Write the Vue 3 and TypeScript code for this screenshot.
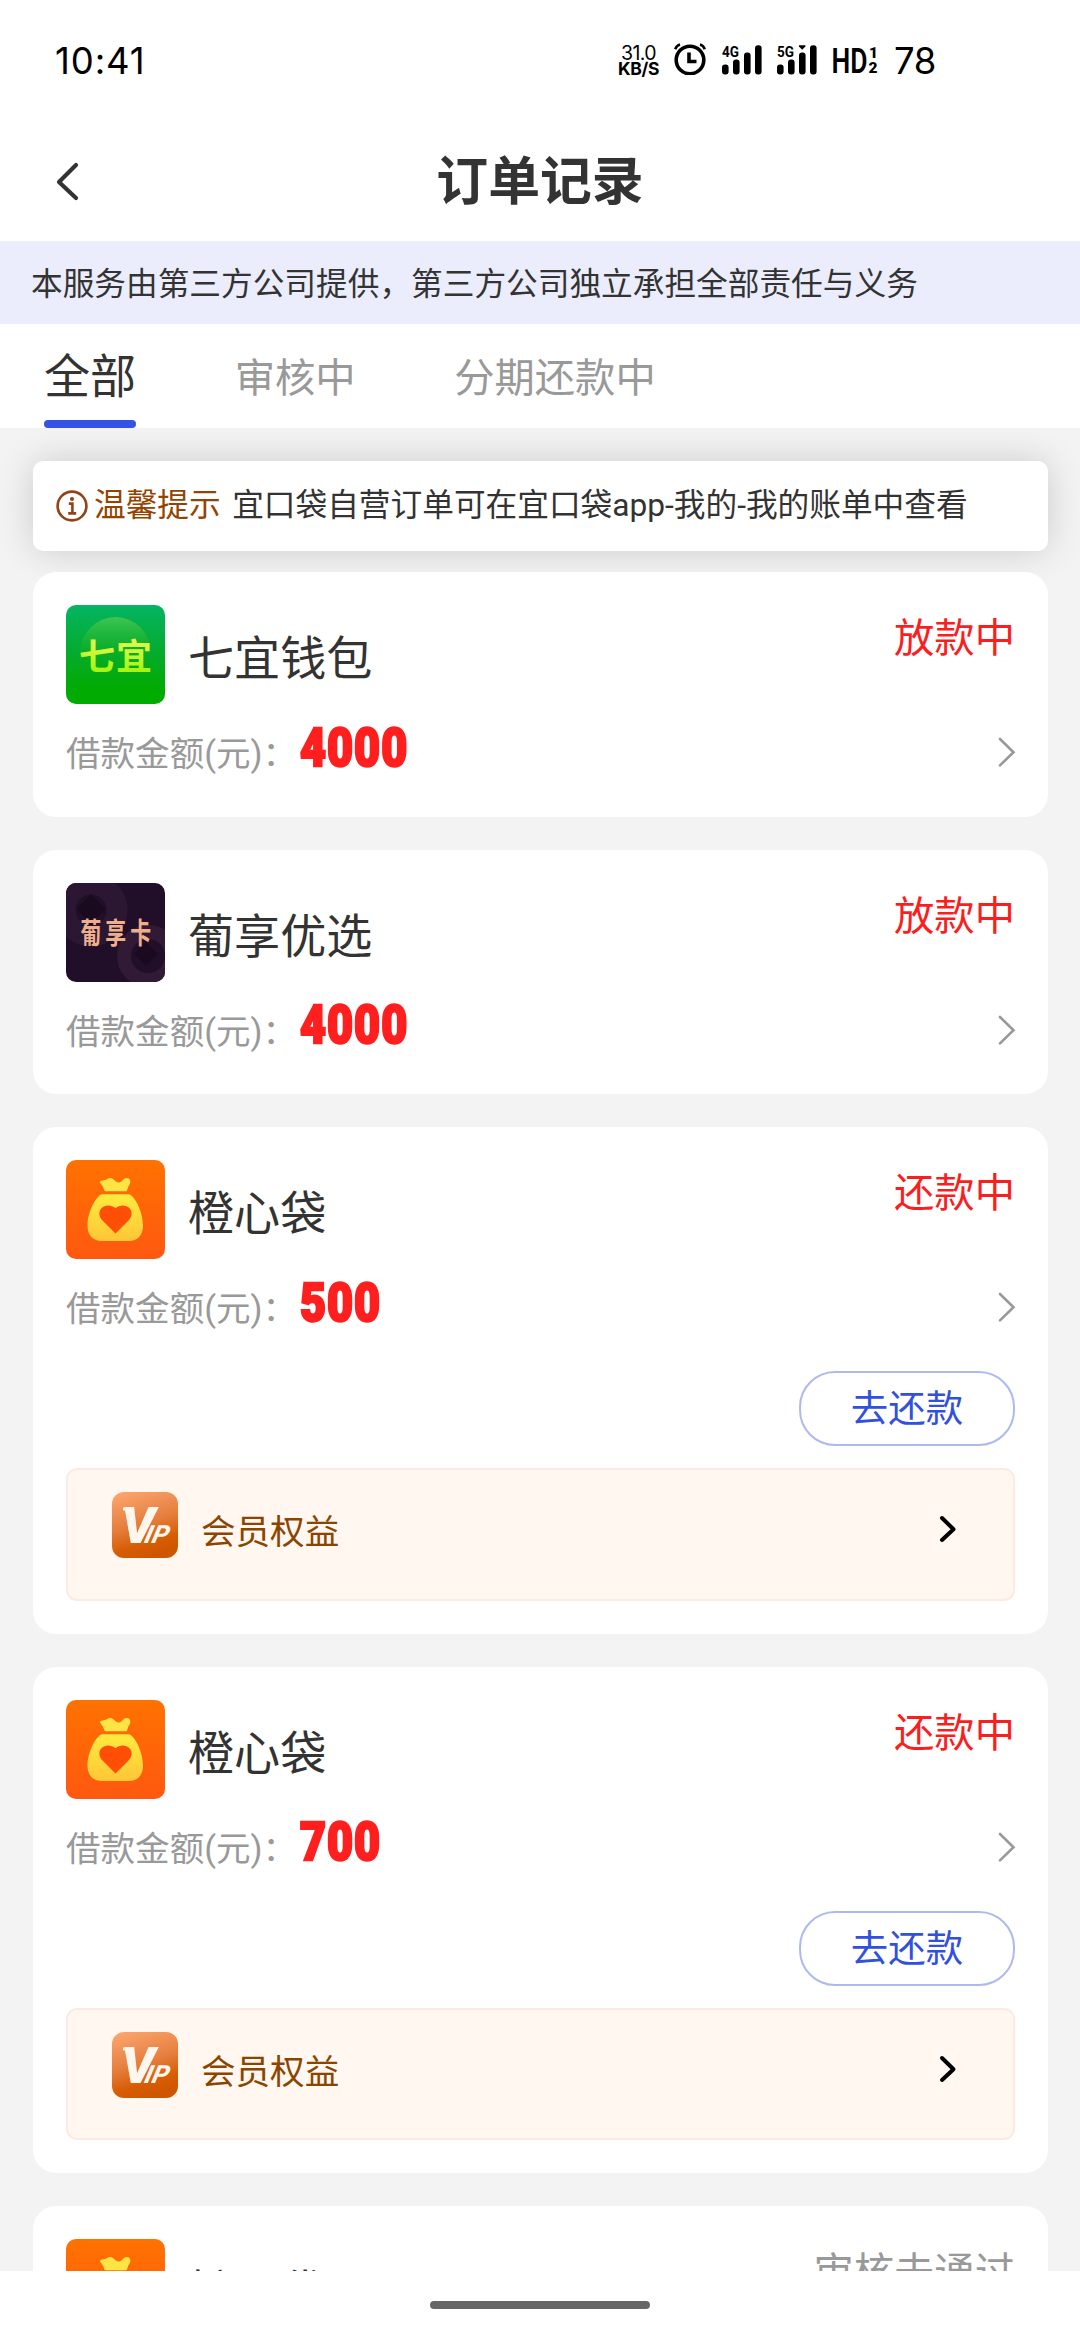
<script setup lang="ts">
interface Order {
  id: number
  logo: 'qiyi' | 'puxiang' | 'bag'
  name: string
  status: string
  muted?: boolean
  amount: string
  repay?: boolean
}

const tabs: string[] = ['全部', '审核中', '分期还款中']

const orders: Order[] = [
  { id: 1, logo: 'qiyi', name: '七宜钱包', status: '放款中', amount: '4000' },
  { id: 2, logo: 'puxiang', name: '葡享优选', status: '放款中', amount: '4000' },
  { id: 3, logo: 'bag', name: '橙心袋', status: '还款中', amount: '500', repay: true },
  { id: 4, logo: 'bag', name: '橙心袋', status: '还款中', amount: '700', repay: true },
  { id: 5, logo: 'bag', name: '橙心袋', status: '审核未通过', muted: true, amount: '500' },
]
</script>

<template>
  <div class="screen">
    <header class="statusbar">
      <span class="clock">10:41</span>
      <div class="indicators">
        <div class="speed">
          <span class="speed-num">31.0</span>
          <span class="speed-unit">KB/S</span>
        </div>
        <svg class="alarm" width="32" height="32" viewBox="0 0 32 32" fill="none" stroke="#000">
          <circle cx="16" cy="17" r="13.8" stroke-width="3.6" />
          <path d="M15 9.500v9h7.500" stroke-width="3.6" />
          <path d="M1.200 6.200Q2.600 2.600 6 1.600M30.800 6.200Q29.400 2.600 26 1.600" stroke-width="2.6" />
        </svg>
        <svg class="sig4" width="40" height="32" viewBox="0 0 40 32">
          <text x="0" y="12.500" class="net" textLength="17" lengthAdjust="spacingAndGlyphs">4G</text>
          <rect x="0" y="20.500" width="6.600" height="10" rx="3" />
          <rect x="11" y="15.500" width="6.600" height="15" rx="3" />
          <rect x="22" y="8.500" width="6.600" height="22" rx="3" />
          <rect x="33" y="1.300" width="6.600" height="29.200" rx="3" />
        </svg>
        <svg class="sig5" width="40" height="32" viewBox="0 0 40 32">
          <text x="0" y="12.500" class="net" textLength="17" lengthAdjust="spacingAndGlyphs">5G</text>
          <rect x="0" y="20.500" width="6.600" height="10" rx="3" />
          <rect x="11" y="15.500" width="6.600" height="15" rx="3" />
          <rect x="22" y="8.500" width="6.600" height="22" rx="3" />
          <path d="M22 1.200h6.400v1.400l-3.200 3.200-3.200-3.200z" />
          <rect x="33" y="1.300" width="6.600" height="29.200" rx="3" />
        </svg>
        <svg class="hd" width="46" height="32" viewBox="0 0 46 32">
          <text x="-1.500" y="28.500" class="hd-text" textLength="36" lengthAdjust="spacingAndGlyphs">HD</text>
          <text x="36" y="13.500" class="hd-sim">1</text>
          <text x="35.500" y="28.500" class="hd-sim">2</text>
        </svg>
        <span class="battery">78</span>
      </div>
    </header>

    <nav class="navbar">
      <svg class="back" width="25" height="42" viewBox="0 0 25 42" fill="none" stroke="#333" stroke-width="4.2" stroke-linecap="round" stroke-linejoin="round">
        <path d="M21 4 4 21 21 37" />
      </svg>
      <h1>订单记录</h1>
    </nav>

    <div class="disclaimer">本服务由第三方公司提供，第三方公司独立承担全部责任与义务</div>

    <div class="tabs">
      <div v-for="(tab, i) in tabs" :key="tab" class="tab" :class="{ active: i === 0 }">{{ tab }}</div>
    </div>

    <main class="list">
      <div class="tip">
        <svg class="info" width="32" height="32" viewBox="0 0 32 32" fill="none" stroke="#934417">
          <circle cx="16" cy="16" r="14.4" stroke-width="2.6" />
          <circle cx="16" cy="9" r="2.1" fill="#934417" stroke="none" />
          <path d="M12.800 13.600h3.600v9.600M12.200 23.400h8" stroke-width="2.6" />
        </svg>
        <span class="tip-label">温馨提示</span>
        <span class="tip-text">宜口袋自营订单可在宜口袋app-我的-我的账单中查看</span>
      </div>

      <section v-for="order in orders" :key="order.id" class="card">
        <div class="card-head">
          <svg v-if="order.logo === 'qiyi'" class="logo" viewBox="0 0 99 99">
            <defs>
              <linearGradient id="qy-bg" x1="0" y1="0" x2="0" y2="1">
                <stop offset="0" stop-color="#04b562" />
                <stop offset="0.45" stop-color="#05ab31" />
                <stop offset="0.85" stop-color="#02ab02" />
              </linearGradient>
              <linearGradient id="qy-moon" x1="0" y1="0" x2="0" y2="1">
                <stop offset="0" stop-color="#3fc552" />
                <stop offset="0.55" stop-color="#12ad1c" stop-opacity="0.3" />
                <stop offset="0.9" stop-color="#02ab02" stop-opacity="0" />
              </linearGradient>
              <linearGradient id="qy-text" x1="0" y1="0" x2="0" y2="1">
                <stop offset="0.1" stop-color="#f2f95a" />
                <stop offset="0.9" stop-color="#9df50c" />
              </linearGradient>
            </defs>
            <rect width="99" height="99" fill="url(#qy-bg)" />
            <circle cx="49.500" cy="47" r="35" fill="url(#qy-moon)" />
            <text x="13" y="65" class="qy-mark" fill="url(#qy-text)" textLength="73">七宜</text>
          </svg>
          <svg v-else-if="order.logo === 'puxiang'" class="logo" viewBox="0 0 99 99">
            <rect width="99" height="99" fill="#210e29" />
            <circle cx="25" cy="27" r="26" fill="none" stroke="#2b1731" stroke-width="21" />
            <path d="M25 11 40 26 25 41 10 26Z" fill="#1a0a20" />
            <circle cx="82" cy="73" r="24" fill="none" stroke="#311a35" stroke-width="14" />
            <path d="M80 59 92 71 80 83 68 71Z" fill="#1a0a20" />
            <g class="px-mark" fill="#eeb08c">
              <text transform="translate(14.600 61) scale(0.720 1)">葡</text>
              <text transform="translate(39.200 61) scale(0.720 1)">享</text>
              <text transform="translate(64.200 61) scale(0.720 1)">卡</text>
            </g>
          </svg>
          <svg v-else class="logo" viewBox="0 0 99 99">
            <defs>
              <linearGradient id="bag-bg" x1="0" y1="0" x2="0" y2="1">
                <stop offset="0" stop-color="#ff7200" />
                <stop offset="1" stop-color="#ff5810" />
              </linearGradient>
              <linearGradient id="bag-body" x1="0" y1="0" x2="0" y2="1">
                <stop offset="0" stop-color="#ffeb3e" />
                <stop offset="1" stop-color="#ffc637" />
              </linearGradient>
            </defs>
            <rect width="99" height="99" fill="url(#bag-bg)" />
            <path d="M34 22.500c0-2 2-1.800 4-2.200 3-.6 4.500-2.800 7-2.200 3 .8 4.500 4.400 7.500 4.400 3.500 0 4.500-4.600 8-4.600 4.600 0 4.600 4.800 2.600 7.300-1.300 1.600-1.400 3.600-2.100 5.300-.2.500-.5.700-1 .7H39.500c-.5 0-.8-.2-1-.7-.8-2-1.400-4.200-3-6z" fill="#ffe446" />
            <path d="M36.500 34.300h26c5.500 0 14.500 17 14.500 31.500 0 9.500-5.500 15.200-14 15.200H36c-9 0-14.500-5.700-14.500-15.200 0-14.500 9.500-31.500 15-31.500z" fill="url(#bag-body)" />
            <path d="M49.500 73.500 36.500 60.500c-4-4-4-9.300-.8-12.500s9.300-3.600 13.800.2c4.500-3.800 10.600-3.400 13.800-.2s3.200 8.500-.8 12.500z" fill="#ff4e06" />
          </svg>
          <span class="name">{{ order.name }}</span>
          <span class="status" :class="{ muted: order.muted }">{{ order.status }}</span>
        </div>

        <div class="amount-row">
          <span class="amount-label">借款金额(元)：</span>
          <span class="amount">{{ order.amount }}</span>
          <svg class="arrow" width="18" height="32" viewBox="0 0 18 32" fill="none" stroke="#999" stroke-width="2.6" stroke-linecap="round">
            <path d="M2 3 15.500 16.200 2 29.400" />
          </svg>
        </div>

        <template v-if="order.repay">
          <div class="actions">
            <button type="button" class="repay">去还款</button>
          </div>
          <div class="vip">
            <svg class="vip-logo" viewBox="0 0 66 66">
              <defs>
                <linearGradient id="vip-bg" x1="0.2" y1="0" x2="0.5" y2="1">
                  <stop offset="0" stop-color="#fba46c" />
                  <stop offset="0.5" stop-color="#e57e3e" />
                  <stop offset="0.8" stop-color="#d75d03" />
                  <stop offset="1" stop-color="#cf5600" />
                </linearGradient>
              </defs>
              <rect width="66" height="66" fill="url(#vip-bg)" />
              <rect x="11" y="15.500" width="7" height="3" fill="#fff6ee" />
              <text x="9" y="51" class="vip-v" textLength="34" lengthAdjust="spacingAndGlyphs">V</text>
              <text transform="translate(30 51) skewX(-23)" class="vip-ip">IP</text>
            </svg>
            <span class="vip-text">会员权益</span>
            <svg class="vip-arrow" width="19" height="30" viewBox="0 0 19 30" fill="none" stroke="#000" stroke-width="4" stroke-linecap="round" stroke-linejoin="round">
              <path d="M4 4 15.500 15.200 4 26" />
            </svg>
          </div>
        </template>
      </section>
    </main>

    <footer class="homebar"><i></i></footer>
  </div>
</template>

<style>
html,
body {
  margin: 0;
  background: #fff;
}
</style>

<style scoped>
.screen {
  display: flex;
  flex-direction: column;
  width: 1080px;
  height: 2340px;
  overflow: hidden;
  background: #fff;
  color: #333;
  font-family: Roboto, 'Noto Sans CJK SC', sans-serif;
}

.screen svg {
  display: block;
  flex: none;
}

.statusbar {
  display: flex;
  flex: none;
  justify-content: space-between;
  box-sizing: border-box;
  height: 122px;
  padding: 37px 145px 0 55px;
  color: #000;
  font-family: Inter, Roboto, sans-serif;
}

.clock,
.battery {
  font-size: 36.500px;
  line-height: 48px;
}

.clock {
  letter-spacing: 0.9px;
}

.indicators {
  display: flex;
  align-items: flex-start;
}

.speed {
  display: flex;
  flex-direction: column;
  align-items: center;
  width: 44px;
  padding-top: 8px;
}

.speed-num {
  font-size: 19.500px;
  line-height: 16px;
  letter-spacing: -0.6px;
}

.speed-unit {
  font-size: 17.500px;
  font-weight: 700;
  line-height: 16px;
  letter-spacing: -0.3px;
}

.alarm {
  margin: 6px 0 0 13px;
}

.sig4 {
  margin: 7px 0 0 16.500px;
}

.sig5 {
  margin: 7px 0 0 15px;
}

.hd {
  margin: 7px 0 0 16px;
}

.net {
  font: 700 15.500px Roboto, sans-serif;
}

.hd-text {
  font: 600 35px Roboto, sans-serif;
}

.hd-sim {
  font: 900 15.500px Roboto, sans-serif;
}

.battery {
  width: 41px;
  margin-left: 15px;
  letter-spacing: -0.3px;
}

.navbar {
  display: grid;
  flex: none;
  grid-template-columns: 120px 1fr 120px;
  align-items: center;
  height: 119px;
}

.back {
  margin-left: 55px;
}

h1 {
  margin: 2px 0 0;
  text-align: center;
  font-size: 51.840px;
  font-weight: 700;
  line-height: 72px;
}

.disclaimer {
  flex: none;
  height: 83px;
  padding-left: 31px;
  background: #ebedfc;
  font-size: 31.680px;
  line-height: 87px;
}

.tabs {
  display: flex;
  flex: none;
  gap: 98.500px;
  height: 104px;
  padding-left: 44px;
}

.tab {
  box-sizing: border-box;
  height: 104px;
  color: #999;
  font-size: 40.320px;
  line-height: 109px;
}

.tab.active {
  display: flex;
  flex-direction: column;
  justify-content: space-between;
  color: #333;
  font-size: 46.080px;
  line-height: 96px;
  padding-top: 5px;
}

.tab.active::after {
  content: '';
  height: 8px;
  margin-top: -5px;
  border-radius: 4px;
  background: #3552e8;
}

.list {
  display: flex;
  flex: 1;
  flex-direction: column;
  gap: 32.900px;
  min-height: 0;
  overflow: hidden;
  padding: 33px 32px 0 33px;
  background: #f3f3f3;
}

.tip {
  display: flex;
  flex: none;
  align-items: center;
  height: 90px;
  margin-bottom: -11.900px;
  padding-left: 23px;
  border-radius: 10px;
  background: #fff;
  box-shadow: 0 0 36px rgba(0, 0, 0, 0.16);
  font-size: 31.680px;
  line-height: 90px;
}

.tip-label {
  margin-left: 6px;
  color: #934400;
}

.tip-text {
  margin-left: 11.500px;
}

.card {
  position: relative;
  flex: none;
  padding: 33px 33px 25.800px;
  border-radius: 23px;
  background: #fff;
}

.card-head {
  display: flex;
  height: 99px;
}

.logo {
  width: 99px;
  height: 99px;
  border-radius: 10px;
}

.qy-mark {
  font: 700 36px 'Noto Sans CJK SC', sans-serif;
}

.px-mark {
  font: 700 29px 'Noto Sans CJK SC', sans-serif;
}

.name {
  margin-left: 23px;
  font-size: 46.080px;
  line-height: 108px;
}

.status {
  margin-left: auto;
  color: #f91f1f;
  font-size: 40.320px;
  line-height: 67px;
}

.status.muted {
  color: #999;
}

.amount-row {
  display: flex;
  align-items: center;
  height: 80px;
  margin-top: 7px;
}

.amount-label {
  width: 234px;
  color: #999;
  font-size: 34.560px;
  line-height: 80px;
  padding-top: 6px;
  white-space: nowrap;
}

.amount {
  color: #ff1f1f;
  font-size: 53.500px;
  font-weight: 900;
  line-height: 72px;
  letter-spacing: 1.200px;
  margin-top: -7px;
  transform: scaleX(0.84);
  transform-origin: left center;
  -webkit-text-stroke: 2.500px #ff1f1f;
}

.arrow {
  margin: 2px -1px 0 auto;
}

.actions {
  display: flex;
  justify-content: flex-end;
  margin-top: 25px;
}

.repay {
  box-sizing: border-box;
  width: 216px;
  height: 75px;
  padding: 0;
  border: 2px solid #aeb9f1;
  border-radius: 36px;
  background: #fff;
  color: #3250de;
  font-family: inherit;
  font-size: 37.440px;
  line-height: 72px;
}

.vip {
  display: flex;
  box-sizing: border-box;
  height: 132.500px;
  margin: 22px 0 7.200px;
  padding: 22px 56px 0 44px;
  border: 2px solid #fcebe1;
  border-radius: 11px;
  background: #fff7f0;
}

.vip-logo {
  width: 66px;
  height: 66px;
  border-radius: 12px;
}

.vip-v {
  fill: #fff6ee;
  font: italic 900 50px Roboto, sans-serif;
}

.vip-ip {
  fill: #fff6ee;
  font: 800 25px Roboto, sans-serif;
}

.vip-text {
  margin-left: 23px;
  color: #8a4500;
  font-size: 34.560px;
  line-height: 81px;
}

.vip-arrow {
  margin: 22px 0 0 auto;
}

.homebar {
  display: flex;
  flex: none;
  justify-content: center;
  box-sizing: border-box;
  height: 69px;
  padding-top: 30px;
}

.homebar i {
  width: 220px;
  height: 8px;
  border-radius: 4px;
  background: #666;
}
</style>
